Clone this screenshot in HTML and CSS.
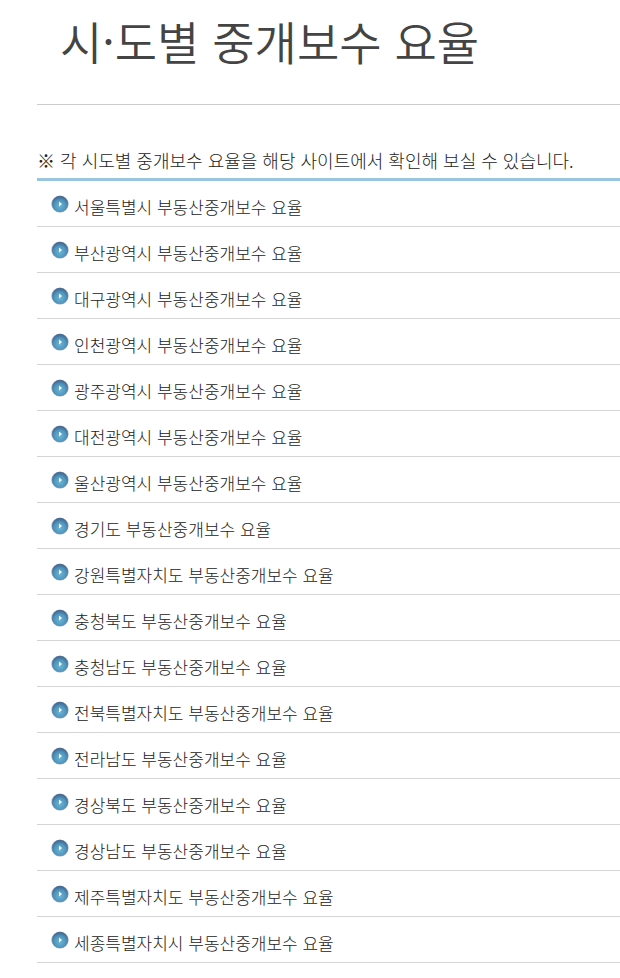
FILE: index.html
```html
<!DOCTYPE html>
<html lang="ko">
<head>
  <meta charset="UTF-8">
  <meta name="viewport" content="width=device-width, initial-scale=1">
  <title>시·도별 중개보수 요율</title>
  <link rel="stylesheet" href="styles.css">
</head>
<body>
  <svg class="sprite" aria-hidden="true">
    <defs>
      <radialGradient id="ball" cx="50%" cy="62%" r="60%">
        <stop offset="0" stop-color="#6bb5d6" />
        <stop offset="0.6" stop-color="#5096bd" />
        <stop offset="1" stop-color="#41658f" />
      </radialGradient>
    </defs>
    <symbol id="bullet" viewBox="0 0 18 18">
      <circle cx="9" cy="9" r="8.6" fill="#8c9fb9" />
      <circle cx="9" cy="9" r="7.9" fill="url(#ball)" />
      <path d="M8 6.5v5l3-2.5z" fill="#fff" />
    </symbol>
  </svg>

  <main class="content">
    <h1 class="title">시·도별 중개보수 요율</h1>

    <p class="note">※ 각 시도별 중개보수 요율을 해당 사이트에서 확인해 보실 수 있습니다.</p>

    <ul class="rate-list">
      <li><svg class="icon"><use href="#bullet" /></svg><a href="#">서울특별시 부동산중개보수 요율</a></li>
      <li><svg class="icon"><use href="#bullet" /></svg><a href="#">부산광역시 부동산중개보수 요율</a></li>
      <li><svg class="icon"><use href="#bullet" /></svg><a href="#">대구광역시 부동산중개보수 요율</a></li>
      <li><svg class="icon"><use href="#bullet" /></svg><a href="#">인천광역시 부동산중개보수 요율</a></li>
      <li><svg class="icon"><use href="#bullet" /></svg><a href="#">광주광역시 부동산중개보수 요율</a></li>
      <li><svg class="icon"><use href="#bullet" /></svg><a href="#">대전광역시 부동산중개보수 요율</a></li>
      <li><svg class="icon"><use href="#bullet" /></svg><a href="#">울산광역시 부동산중개보수 요율</a></li>
      <li><svg class="icon"><use href="#bullet" /></svg><a href="#">경기도 부동산중개보수 요율</a></li>
      <li><svg class="icon"><use href="#bullet" /></svg><a href="#">강원특별자치도 부동산중개보수 요율</a></li>
      <li><svg class="icon"><use href="#bullet" /></svg><a href="#">충청북도 부동산중개보수 요율</a></li>
      <li><svg class="icon"><use href="#bullet" /></svg><a href="#">충청남도 부동산중개보수 요율</a></li>
      <li><svg class="icon"><use href="#bullet" /></svg><a href="#">전북특별자치도 부동산중개보수 요율</a></li>
      <li><svg class="icon"><use href="#bullet" /></svg><a href="#">전라남도 부동산중개보수 요율</a></li>
      <li><svg class="icon"><use href="#bullet" /></svg><a href="#">경상북도 부동산중개보수 요율</a></li>
      <li><svg class="icon"><use href="#bullet" /></svg><a href="#">경상남도 부동산중개보수 요율</a></li>
      <li><svg class="icon"><use href="#bullet" /></svg><a href="#">제주특별자치도 부동산중개보수 요율</a></li>
      <li><svg class="icon"><use href="#bullet" /></svg><a href="#">세종특별자치시 부동산중개보수 요율</a></li>
    </ul>
  </main>
</body>
</html>
```
FILE: styles.css
```css
body {
  margin: 0;
  background-color: #fff;
  color: #222;
  font-family: "Noto Sans CJK KR", sans-serif;
  font-weight: 300;
}

.sprite {
  position: absolute;
  width: 0;
  height: 0;
}

.content {
  padding: 0 0 14px 37px;
}

.title {
  margin: 0;
  padding: 6px 23px 30px;
  border-bottom: 1px solid #ccc;
  color: #444;
  font-size: 46px;
  font-weight: 350;
  line-height: 68px;
}

.note {
  margin: 0;
  padding: 41px 0 4px;
  font-size: 18px;
  line-height: 28px;
  white-space: nowrap;
}

.rate-list {
  list-style: none;
  margin: 0;
  padding: 0;
  border-top: 3px solid #9ac5de;
}

.rate-list li {
  display: flex;
  align-items: flex-start;
  gap: 5px;
  padding: 14px 14px 7px;
  border-bottom: 1px solid #d5d5d5;
}

.rate-list a {
  color: #222;
  font-size: 17px;
  line-height: 24px;
  text-decoration: none;
}

.rate-list a:hover {
  text-decoration: underline;
}

.icon {
  flex: none;
  width: 18px;
  height: 18px;
}
```
